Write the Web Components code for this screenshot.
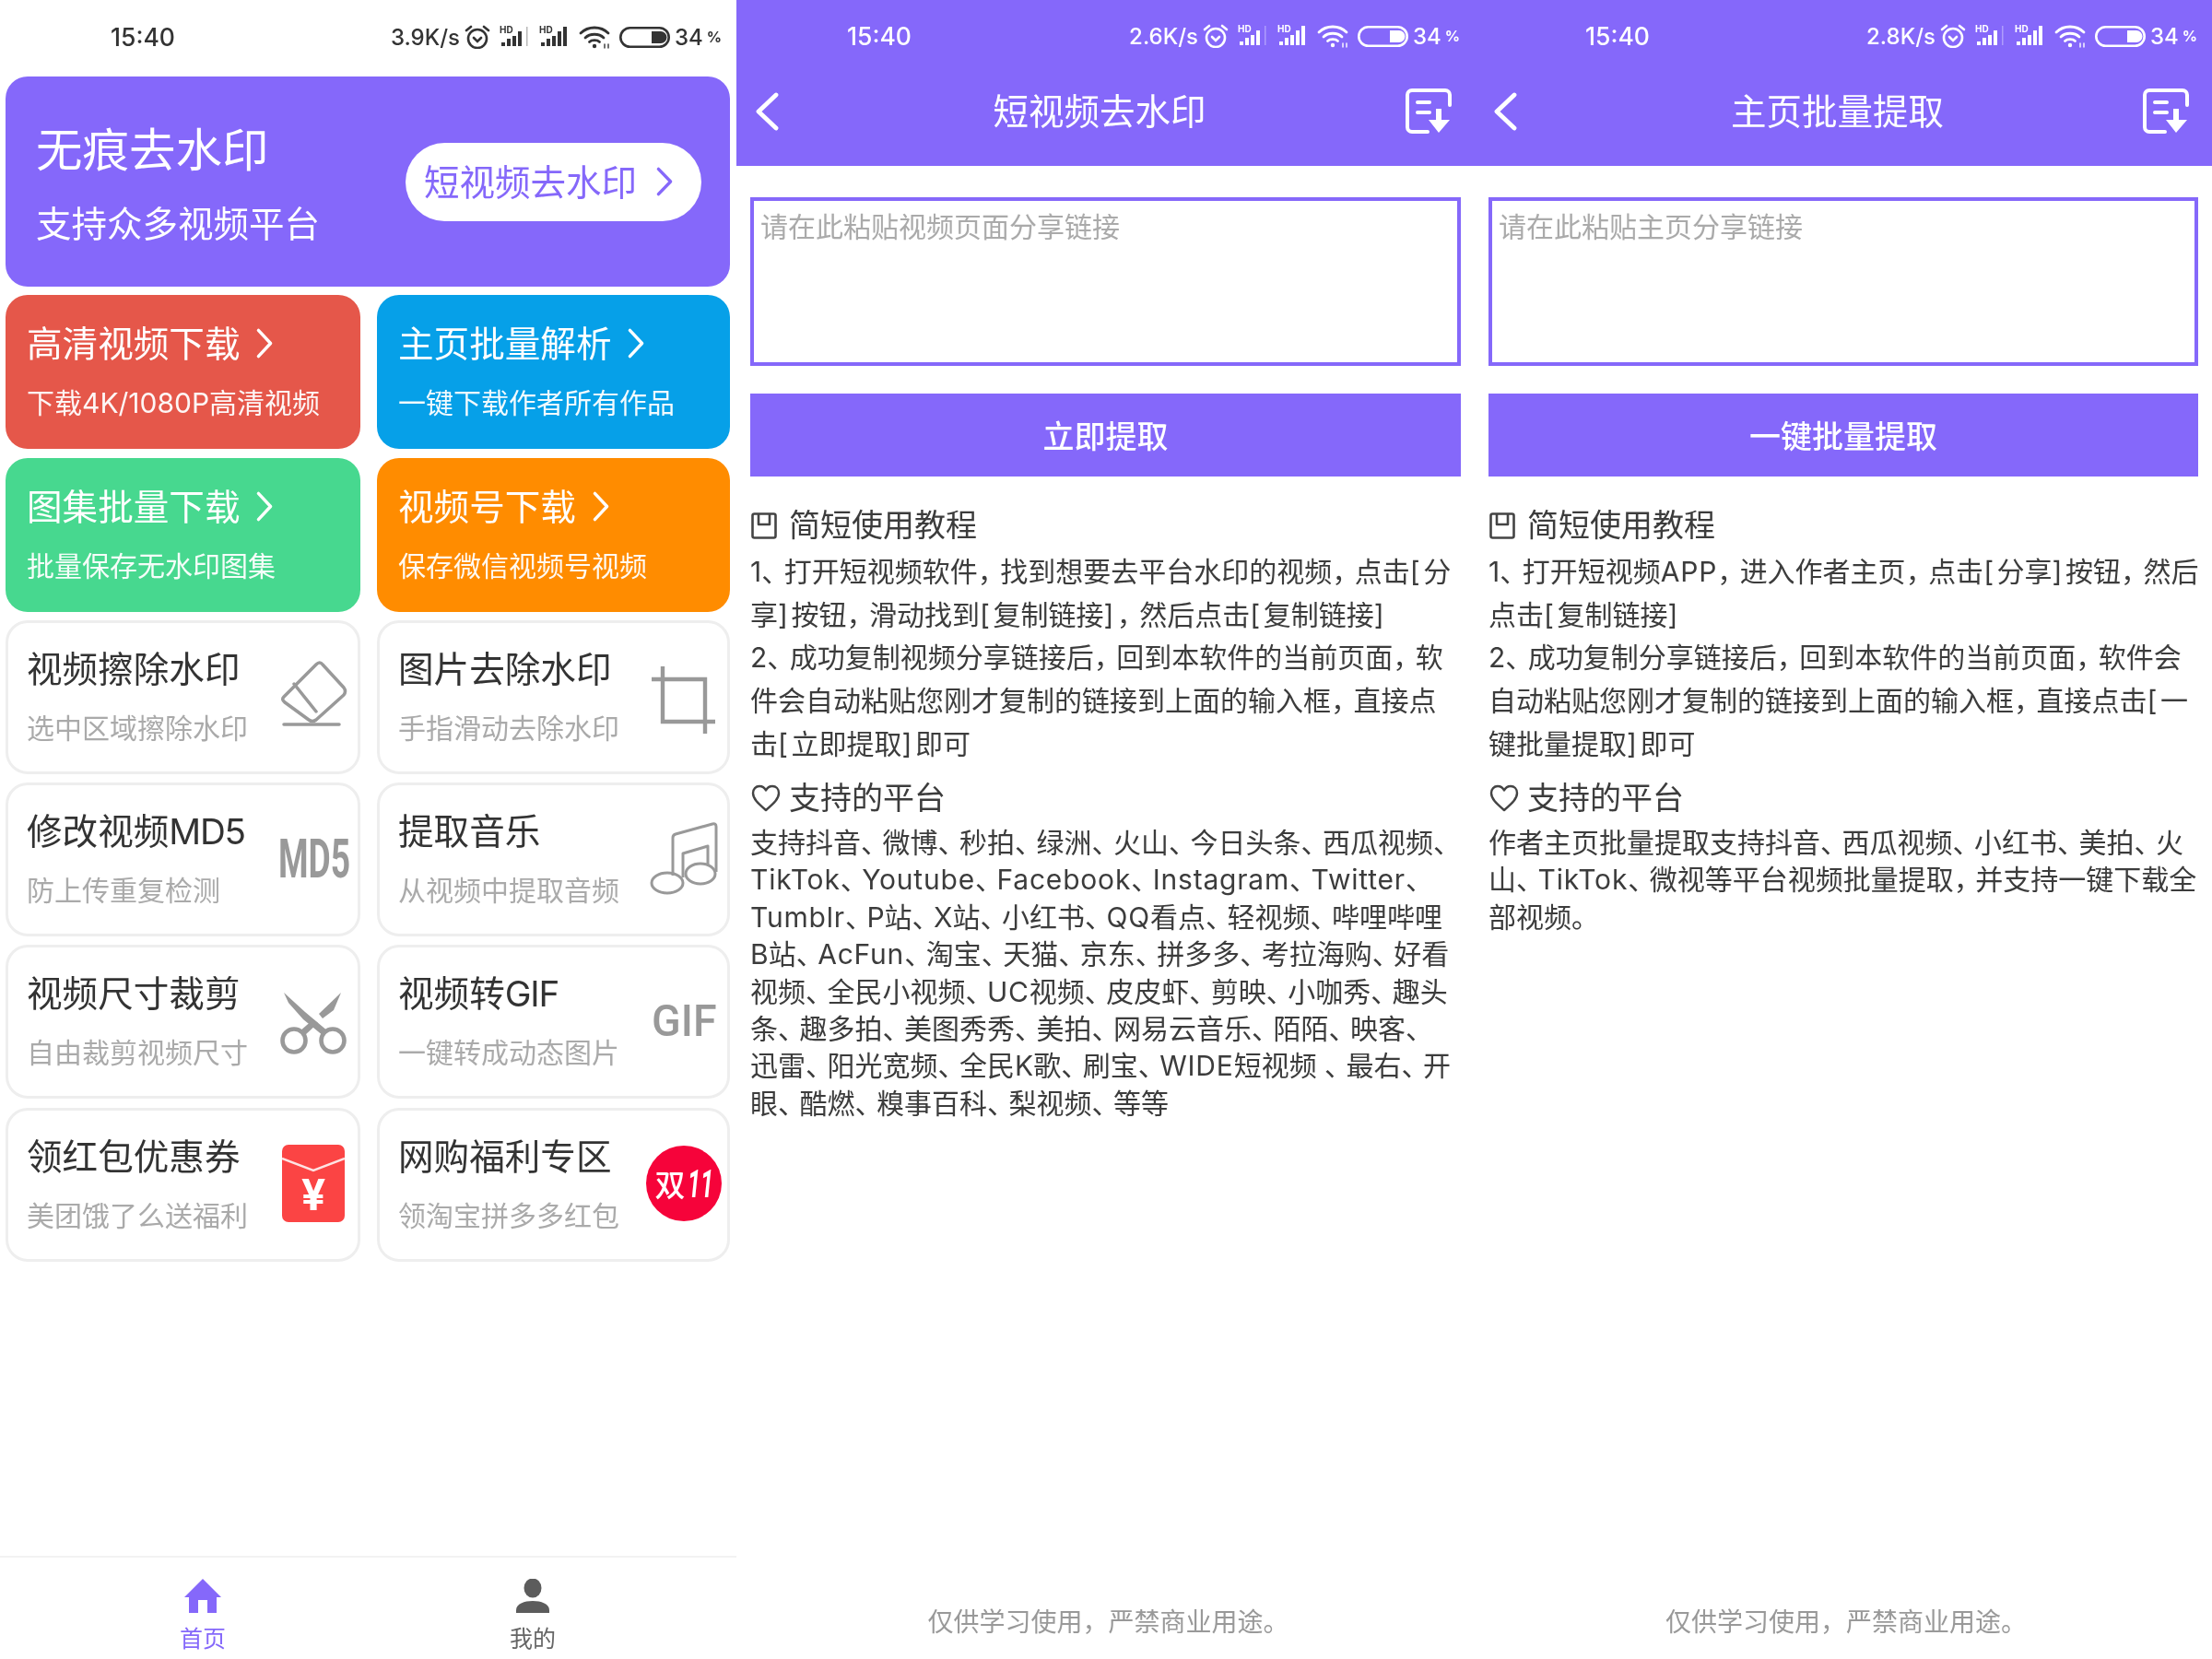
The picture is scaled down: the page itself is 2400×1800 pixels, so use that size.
<!DOCTYPE html>
<html lang="zh-CN">
<head>
<meta charset="utf-8">
<title>去水印</title>
<style>
    html, body{ margin: 0; background: #fff; }
    body{
        width: 2400px;
        height: 1800px;
        overflow: hidden;
        display: flex;
        font-family: Inter, "Noto Sans CJK SC", sans-serif;
        color: #333;
        --purple: #8568fa;
    }
</style>
</head>
<body>

<home-screen style="width:799px">
    <app-status slot="status" speed="3.9K/s"></app-status>
    <promo-banner title-text="无痕去水印" sub="支持众多视频平台" action="短视频去水印"></promo-banner>
    <tile-card tone="#e5574a" label="高清视频下载" sub="下载4K/1080P高清视频"></tile-card>
    <tile-card tone="#06a0e8" label="主页批量解析" sub="一键下载作者所有作品"></tile-card>
    <tile-card tone="#47d88f" label="图集批量下载" sub="批量保存无水印图集"></tile-card>
    <tile-card tone="#ff8c00" label="视频号下载" sub="保存微信视频号视频"></tile-card>
    <tile-card label="视频擦除水印" sub="选中区域擦除水印"><tile-icon name="eraser"></tile-icon></tile-card>
    <tile-card label="图片去除水印" sub="手指滑动去除水印"><tile-icon name="crop"></tile-icon></tile-card>
    <tile-card label="修改视频MD5" sub="防上传重复检测"><tile-icon name="md5"></tile-icon></tile-card>
    <tile-card label="提取音乐" sub="从视频中提取音频"><tile-icon name="music"></tile-icon></tile-card>
    <tile-card label="视频尺寸裁剪" sub="自由裁剪视频尺寸"><tile-icon name="scissors"></tile-icon></tile-card>
    <tile-card label="视频转GIF" sub="一键转成动态图片"><tile-icon name="gif"></tile-icon></tile-card>
    <tile-card label="领红包优惠券" sub="美团饿了么送福利"><tile-icon name="packet"></tile-icon></tile-card>
    <tile-card label="网购福利专区" sub="领淘宝拼多多红包"><tile-icon name="double11"></tile-icon></tile-card>
</home-screen>

<tool-screen style="width:801px" speed="2.6K/s" heading="短视频去水印" hint="请在此粘贴视频页面分享链接" action="立即提取">
    <guide-block icon="book" heading="简短使用教程" lines="46.7" tight="5.5">1、打开短视频软件，找到想要去平台水印的视频，点击[分<br>享]按钮，滑动找到[复制链接]，然后点击[复制链接]<br>2、成功复制视频分享链接后，回到本软件的当前页面，软<br>件会自动粘贴您刚才复制的链接到上面的输入框，直接点<br>击[立即提取]即可</guide-block>
    <guide-block icon="heart" heading="支持的平台" lines="40.4" tight="6.5" gap="3">支持抖音、微博、秒拍、绿洲、火山、今日头条、西瓜视频、<br>TikTok、Youtube、Facebook、Instagram、Twitter、<br>Tumblr、P站、X站、小红书、QQ看点、轻视频、哔哩哔哩<br>B站、AcFun、淘宝、天猫、京东、拼多多、考拉海购、好看<br>视频、全民小视频、UC视频、皮皮虾、剪映、小咖秀、趣头<br>条、趣多拍、美图秀秀、美拍、网易云音乐、陌陌、映客、<br>迅雷、阳光宽频、全民K歌、刷宝、WIDE短视频 、最右、开<br>眼、酷燃、糗事百科、梨视频、等等</guide-block>
</tool-screen>

<tool-screen style="width:800px" speed="2.8K/s" heading="主页批量提取" hint="请在此粘贴主页分享链接" action="一键批量提取">
    <guide-block icon="book" heading="简短使用教程" lines="46.7" tight="5.5">1、打开短视频APP，进入作者主页，点击[分享]按钮，然后<br>点击[复制链接]<br>2、成功复制分享链接后，回到本软件的当前页面，软件会<br>自动粘贴您刚才复制的链接到上面的输入框，直接点击[一<br>键批量提取]即可</guide-block>
    <guide-block icon="heart" heading="支持的平台" lines="40.4" tight="6.5" gap="3">作者主页批量提取支持抖音、西瓜视频、小红书、美拍、火<br>山、TikTok、微视等平台视频批量提取，并支持一键下载全<br>部视频。</guide-block>
</tool-screen>

<script>
const chevron = (w, h, sw) => `<svg width="${w}" height="${h}" viewBox="0 0 ${w} ${h}" fill="none" stroke="currentColor" stroke-width="${sw}" stroke-linecap="round" stroke-linejoin="round"><path d="M${sw} ${sw}L${w - sw} ${h / 2}L${sw} ${h - sw}"/></svg>`;

const signal = (emptyLast) => `<svg class="sig" width="33" height="36" viewBox="0 -12 33 36" fill="currentColor">
    <text x="0" y="8" font-family="Inter, sans-serif" font-size="10" font-weight="700">HD</text>
    <rect x="2" y="18" width="4" height="4"/><rect x="8" y="14" width="4" height="8"/>
    <rect x="14" y="11" width="4" height="11"/><rect x="20" y="6" width="4" height="16"/>
    <rect x="${emptyLast ? 29 : 26}" y="1" width="${emptyLast ? 1.5 : 4}" height="21" opacity="${emptyLast ? .35 : 1}"/>
</svg>`;

window.customElements.define('app-status', class extends HTMLElement{
    constructor(){
        super();
        this.attachShadow({ mode: 'open' });
    }
    connectedCallback(){
        this.shadowRoot.innerHTML = `
        <style>
            :host{
                display: flex;
                align-items: center;
                height: 78px;
                padding: 0 16px 0 120px;
                box-sizing: border-box;
                color: var(--status, #333);
                font-size: 24px;
                font-weight: 500;
                flex: none;
            }
            .time{ margin-right: auto; font-size: 26.5px; }
            svg{ display: block; flex: none; }
            .sig{ margin-top: -12px; }
            .speed{ margin-right: 5px; }
            .pct{ font-size: 16px; font-weight: 700; margin-left: 4px; }
            .gap{ margin-left: 10px; }
            .num{ margin-left: 5px; }
        </style>
        <span class="time">15:40</span>
        <span class="speed">${this.getAttribute('speed')}</span>
        <svg width="28" height="26" viewBox="0 0 28 26" fill="none" stroke="currentColor" stroke-width="2.6" stroke-linecap="round">
            <circle cx="14" cy="15" r="10"/><path d="M10 14l4 4l4-4M2 6l5-4M26 6l-5-4"/>
        </svg>
        <span class="gap">${signal(true)}</span>
        <span class="gap">${signal(false)}</span>
        <svg class="gap" width="34" height="25" viewBox="0 0 34 25" fill="none" stroke="currentColor" stroke-width="2.8" stroke-linecap="round">
            <path d="M2 8C10 0 24 0 32 8M7 13C12 8 22 8 27 13M11.5 17.5C14 15 20 15 22.5 17.5"/>
            <circle cx="17" cy="22" r="2.2" fill="currentColor" stroke="none"/>
            <path d="M28 20v4M32 20v4" stroke-width="1.4"/>
        </svg>
        <svg class="gap" width="55" height="23" viewBox="0 0 55 23">
            <rect x="1.3" y="1.3" width="52.4" height="20.4" rx="10.2" fill="none" stroke="currentColor" stroke-width="2.6"/>
            <path d="M35 5h10a6.5 6.5 0 0 1 0 13h-10z" fill="currentColor"/>
        </svg>
        <span class="num">34</span><span class="pct">%</span>`;
    }
});

window.customElements.define('promo-banner', class extends HTMLElement{
    constructor(){
        super();
        this.attachShadow({ mode: 'open' });
    }
    connectedCallback(){
        this.shadowRoot.innerHTML = `
        <style>
            :host{
                display: flex;
                align-items: center;
                justify-content: space-between;
                grid-column: 1 / 3;
                height: 228px;
                box-sizing: border-box;
                padding: 0 31px 0 33px;
                border-radius: 24px;
                background: var(--purple);
                color: #fff;
            }
            .copy{ padding-top: 7px; }
            .title{ font-size: 50.5px; line-height: 60px; margin-bottom: 25px; }
            .sub{ font-size: 38.5px; line-height: 50px; }
            .pill{
                display: flex;
                align-items: center;
                gap: 20px;
                height: 85px;
                padding: 0 30px 4px 20px;
                box-sizing: border-box;
                border-radius: 43px;
                background: #fff;
                color: var(--purple);
                font-size: 38.5px;
            }
            .pill svg{ margin-top: 4px; }
        </style>
        <div class="copy">
            <div class="title">${this.getAttribute('title-text')}</div>
            <div class="sub">${this.getAttribute('sub')}</div>
        </div>
        <div class="pill">${this.getAttribute('action')}${chevron(20, 34, 3.4)}</div>`;
    }
});

window.customElements.define('tile-card', class extends HTMLElement{
    constructor(){
        super();
        this.attachShadow({ mode: 'open' });
    }
    connectedCallback(){
        const tone = this.getAttribute('tone');
        const label = this.getAttribute('label').replace(/[A-Z0-9]+/, '<span class="latin">$&</span>');
        this.shadowRoot.innerHTML = `
        <style>
            :host{
                display: flex;
                align-items: center;
                height: 167px;
                box-sizing: border-box;
                padding: 0 10px 2px 23px;
                border-radius: 24px;
                ${tone ? `background: ${tone}; color: #fff;` : 'background: #fff; border: 3px solid #eee; padding-left: 20px; padding-right: 7px;'}
            }
            .text{ flex: 1; min-width: 0; }
            .label{
                display: flex;
                align-items: center;
                gap: 17px;
                font-size: 38.6px;
                line-height: 50px;
                margin-bottom: 19px;
                white-space: nowrap;
            }
            .latin{ letter-spacing: -1.2px; }
            .label svg{ margin-top: -1px; }
            .sub{
                font-size: 30px;
                line-height: 40px;
                color: ${tone ? '#fff' : '#aaa'};
                white-space: nowrap;
                opacity: ${tone ? .95 : 1};
            }
        </style>
        <div class="text">
            <div class="label"><span>${label}</span>${tone ? chevron(20, 35, 3.4) : ''}</div>
            <div class="sub">${this.getAttribute('sub')}</div>
        </div>
        <slot></slot>`;
    }
});

const tileIcons = {
    eraser: `<svg width="80" height="80" viewBox="0 0 80 80" fill="none" stroke="#999" stroke-width="3.5" stroke-linejoin="round" stroke-linecap="round">
        <path d="M42 6Q46 2 49 6L72 31Q75 35 72 39L42 66Q38 69 34 66L8 47Q4 44 7 41Z"/><path d="M18 27L42 57M7 71H67"/></svg>`,
    crop: `<svg width="80" height="86" viewBox="0 0 80 86" fill="none" stroke="#999" stroke-width="4.4"><path d="M17 11V71H74M5 25H63V84"/></svg>`,
    music: `<svg width="80" height="80" viewBox="0 0 80 80" fill="none" stroke="#999" stroke-width="3" stroke-linejoin="round">
        <ellipse cx="22" cy="66" rx="17" ry="11"/><ellipse cx="58" cy="56" rx="16" ry="11"/>
        <path d="M28 58V17Q28 14 31 13L71 2Q75 1 75 5V54"/><path d="M39 60V34L66 26V47"/></svg>`,
    scissors: `<svg width="80" height="80" viewBox="0 0 80 80" fill="none" stroke="#999" stroke-width="4.6">
        <circle cx="18" cy="61" r="12.5"/><circle cx="60" cy="61" r="12.5"/>
        <g fill="#999" stroke="none">
            <path d="M7 9L30 30L55 51L50 56L28 38L12 20Z"/>
            <path d="M69 9L61 28L49 37L45 32Z"/>
            <path d="M24 51L39 38L44 42L29 56Z"/>
        </g></svg>`
};

window.customElements.define('tile-icon', class extends HTMLElement{
    constructor(){
        super();
        this.attachShadow({ mode: 'open' });
    }
    connectedCallback(){
        const name = this.getAttribute('name');
        let body = tileIcons[name] || '';
        if(name === 'md5') body = '<span class="word md5">MD5</span>';
        if(name === 'gif') body = '<span class="word gif">GIF</span>';
        if(name === 'packet') body = `<div class="packet"><svg width="68" height="40" viewBox="0 0 68 40" fill="none" stroke="#fff" stroke-width="2.5" opacity=".85"><path d="M0 15L34 28L68 15"/></svg><span>¥</span></div>`;
        if(name === 'double11') body = '<div class="dbl"><span>双</span><i>11</i></div>';
        this.shadowRoot.innerHTML = `
        <style>
            :host{
                display: flex;
                align-items: center;
                justify-content: center;
                width: 80px;
                height: 86px;
                flex: none;
            }
            svg{ display: block; }
            .word{
                font-family: Roboto, sans-serif;
                font-weight: 700;
                color: #999;
                line-height: 1;
            }
            .md5{ font-size: 60px; transform: scaleX(.62); }
            .gif{ font-size: 48px; transform: scaleX(.97); font-weight: 500; }
            .packet{
                position: relative;
                width: 68px;
                height: 84px;
                margin-right: 2px;
                background: #fb4444;
                border-radius: 7px;
                color: #fff;
                display: flex;
                align-items: flex-end;
                justify-content: center;
                font-size: 48px;
                font-weight: 700;
                line-height: 58px;
                font-family: Roboto, sans-serif;
            }
            .packet svg{ position: absolute; left: 0; top: 0; }
            .dbl{
                width: 82px;
                height: 82px;
                border-radius: 50%;
                background: #f6033a;
                color: #fff;
                display: flex;
                align-items: center;
                justify-content: center;
                font-size: 33px;
                font-weight: 500;
                flex: none;
            }
            .dbl i{
                display: inline-block;
                width: 28px;
                margin-left: 2px;
                font-family: Roboto, sans-serif;
                font-size: 42px;
                font-weight: 700;
                transform: scaleX(.6);
                transform-origin: left center;
            }
        </style>
        ${body}`;
    }
});

window.customElements.define('home-screen', class extends HTMLElement{
    constructor(){
        super();
        this.attachShadow({ mode: 'open' });
    }
    connectedCallback(){
        this.shadowRoot.innerHTML = `
        <style>
            :host{
                display: flex;
                flex-direction: column;
                height: 1800px;
                box-sizing: border-box;
                flex: none;
                background: #fff;
                filter: blur(.6px);
            }
            .top{ height: 83px; padding-top: 1px; box-sizing: border-box; }
            .grid{
                display: grid;
                grid-template-columns: 385px 383px;
                column-gap: 18px;
                row-gap: 9.3px;
                padding-left: 6px;
            }
            .tabs{
                margin-top: auto;
                height: 112px;
                box-sizing: border-box;
                border-top: 2px solid #f2f2f2;
                display: grid;
                grid-template-columns: 440px 276px;
                padding-top: 23px;
                font-size: 25px;
                line-height: 30px;
                text-align: center;
                color: #666;
            }
            .tabs svg{ display: block; margin: 0 auto 13px; }
            .on{ color: var(--purple); }
        </style>
        <div class="top"><slot name="status"></slot></div>
        <div class="grid"><slot></slot></div>
        <div class="tabs">
            <div class="on">
                <svg width="42" height="37" viewBox="0 0 42 37" fill="currentColor"><path d="M21 0L41 20H36V37H26V23H16V37H6V20H1Z"/></svg>
                首页
            </div>
            <div>
                <svg width="36" height="37" viewBox="0 0 36 37" fill="#5c5c5c"><ellipse cx="18" cy="10" rx="9.5" ry="10.5"/><path d="M0 37V34C0 27 9 24 18 24C27 24 36 27 36 34V37Z"/></svg>
                我的
            </div>
        </div>`;
    }
});

window.customElements.define('tool-screen', class extends HTMLElement{
    constructor(){
        super();
        this.attachShadow({ mode: 'open' });
    }
    connectedCallback(){
        this.shadowRoot.innerHTML = `
        <style>
            :host{
                display: flex;
                flex-direction: column;
                height: 1800px;
                box-sizing: border-box;
                flex: none;
                background: #fff;
                filter: blur(.6px);
            }
            .head{
                height: 180px;
                background: var(--purple);
                color: #fff;
                --status: #fff;
            }
            .bar{
                display: grid;
                grid-template-columns: 25px 1fr 50px;
                align-items: center;
                height: 86px;
                padding: 0 25px 0 21px;
            }
            .bar svg{ display: block; }
            .bar h1{
                margin: 0;
                padding-left: 16px;
                text-align: center;
                font-size: 38.5px;
                font-weight: 400;
                line-height: 50px;
            }
            .form{
                display: flex;
                flex-direction: column;
                gap: 30px;
                margin: 34px 15px 0;
            }
            .input{
                height: 183px;
                box-sizing: border-box;
                border: 4px solid var(--purple);
                padding: 7px 7px;
                color: #aaa;
                font-size: 30px;
                line-height: 42px;
            }
            .go{
                height: 90px;
                box-sizing: border-box;
                padding-bottom: 2px;
                background: var(--purple);
                color: #fff;
                display: flex;
                align-items: center;
                justify-content: center;
                font-size: 34px;
                font-weight: 500;
            }
            .guide{ padding: 28px 12px 0 15px; }
            .foot{
                margin-top: auto;
                height: 84px;
                display: flex;
                align-items: center;
                justify-content: center;
                box-sizing: border-box;
                padding-left: 6px;
                font-size: 28px;
                color: #999;
            }
        </style>
        <div class="head">
            <app-status speed="${this.getAttribute('speed')}"></app-status>
            <div class="bar">
                <svg width="25" height="42" viewBox="0 0 25 42" fill="none" stroke="currentColor" stroke-width="4.8" stroke-linecap="round" stroke-linejoin="round"><path d="M22 3L3 21L22 39"/></svg>
                <h1>${this.getAttribute('heading')}</h1>
                <svg width="50" height="50" viewBox="0 0 50 50" fill="none" stroke="currentColor" stroke-width="4" stroke-linecap="round">
                    <path d="M24 47H7a5 5 0 0 1-5-5V7a5 5 0 0 1 5-5H43a5 5 0 0 1 5 5V18"/>
                    <path d="M13 15H26M13 26H26"/>
                    <path d="M33 22H39V34H48L36 48L25 34H33Z" fill="currentColor" stroke="none"/>
                </svg>
            </div>
        </div>
        <div class="form">
            <div class="input">${this.getAttribute('hint')}</div>
            <div class="go">${this.getAttribute('action')}</div>
        </div>
        <div class="guide"><slot></slot></div>
        <div class="foot">仅供学习使用，严禁商业用途。</div>`;
    }
});

window.customElements.define('guide-block', class extends HTMLElement{
    constructor(){
        super();
        this.attachShadow({ mode: 'open' });
    }
    connectedCallback(){
        const icons = {
            book: `<svg width="28" height="29" viewBox="0 0 28 29" fill="none" stroke="#444" stroke-width="2.6" stroke-linejoin="round"><rect x="1.5" y="1.5" width="25" height="26" rx="2"/><path d="M8 2V13H20V2"/></svg>`,
            heart: `<svg width="32" height="30" viewBox="0 0 32 30" fill="none" stroke="#444" stroke-width="2.4" stroke-linejoin="round"><path d="M16 28C8 21 2 16 2 9.5C2 5 5 2 9 2C12 2 14.5 3.5 16 6.5C17.5 3.5 20 2 23 2C27 2 30 5 30 9.5C30 16 24 21 16 28Z"/></svg>`
        };
        // the phone font sets 、，narrower and latin and brackets wider than ours
        const tight = this.getAttribute('tight');
        this.innerHTML = this.innerHTML.split('<br>').map(line => line
            .replace(/[A-Za-z]{2,}/g, '<span style="letter-spacing:.8px">$&</span>')
            .replace(/[、，]/g, `<span style="letter-spacing:-${tight}px">$&</span>`)
            .replace(/[\[\]]/g, '<span style="letter-spacing:3.5px">$&</span>')
        ).join('<br>');
        this.shadowRoot.innerHTML = `
        <style>
            :host{
                display: block;
                margin-bottom: 10.5px;
                color: #3c3c3c;
                font-size: 30px;
                line-height: ${this.getAttribute('lines')}px;
            }
            .title{
                display: flex;
                align-items: center;
                height: 50px;
                font-size: 34px;
                margin-bottom: 2px;
            }
            .ico{ width: 42px; padding-left: 1px; box-sizing: border-box; flex: none; }
            .ico svg{ display: block; }
            .body{ white-space: nowrap; margin-top: ${this.getAttribute('gap') || 0}px; }
        </style>
        <div class="title"><span class="ico">${icons[this.getAttribute('icon')]}</span><span>${this.getAttribute('heading')}</span></div>
        <div class="body"><slot></slot></div>`;
    }
});
</script>
</body>
</html>
